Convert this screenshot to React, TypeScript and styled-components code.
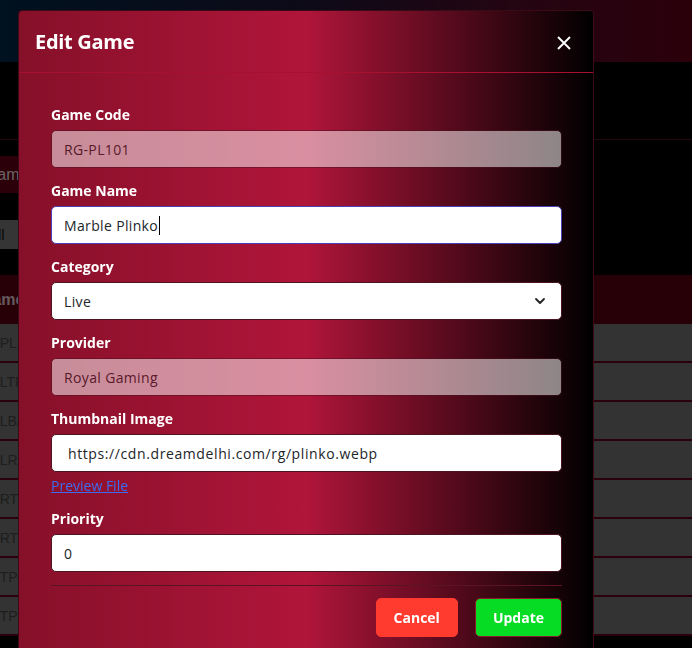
import styled, { createGlobalStyle } from "styled-components";

const GlobalStyle = createGlobalStyle`
  * { box-sizing: border-box; }
  body {
    margin: 0;
    background: #000;
    overflow: hidden;
    font-family: "Open Sans", "Noto Sans", sans-serif;
  }
`;

const gameRows = [
  "RG-PL101",
  "RG-LTP01",
  "RG-LBA01",
  "RG-LRC01",
  "RG-RTV01",
  "RG-RTV02",
  "RG-TP-01",
  "RG-TP-02",
];

const ChevronIcon = () => (
  <svg width="12" height="8" viewBox="0 0 12 8" fill="none">
    <path d="M2 2l4 4 4-4" stroke="#222" strokeWidth="1.8" strokeLinecap="round" strokeLinejoin="round" />
  </svg>
);

const CloseIcon = () => (
  <svg width="16" height="16" viewBox="0 0 16 16" fill="none">
    <path d="M2 2l12 12M14 2L2 14" stroke="#fff" strokeWidth="1.9" />
  </svg>
);

const App = () => {
  return (
    <>
      <GlobalStyle />
      <Page>
        <TopBar />
        <TitleArea />
        <ToolArea>
          <AddButton>Add Game</AddButton>
          <FilterSelect>All</FilterSelect>
        </ToolArea>
        <Table>
          <TableHead>Game Name</TableHead>
          {gameRows.map((code, index) => (
            <TableRow key={index}>{code}</TableRow>
          ))}
        </Table>
      </Page>

      <Backdrop />

      <Modal>
        <ModalHeader>
          <ModalTitle>Edit Game</ModalTitle>
          <CloseButton>
            <CloseIcon />
          </CloseButton>
        </ModalHeader>
        <ModalBody>
          <Field>
            <Label>Game Code</Label>
            <InputBox $disabled>RG-PL101</InputBox>
          </Field>
          <Field>
            <Label>Game Name</Label>
            <InputBox $focused>
              Marble Plinko
              <Caret />
            </InputBox>
          </Field>
          <Field>
            <Label>Category</Label>
            <InputBox>
              Live
              <SelectArrow>
                <ChevronIcon />
              </SelectArrow>
            </InputBox>
          </Field>
          <Field>
            <Label>Provider</Label>
            <InputBox $disabled>Royal Gaming</InputBox>
          </Field>
          <Field>
            <Label>Thumbnail Image</Label>
            <InputBox $wide>https://cdn.dreamdelhi.com/rg/plinko.webp</InputBox>
            <PreviewLink href="#">Preview File</PreviewLink>
          </Field>
          <Field>
            <Label>Priority</Label>
            <InputBox>0</InputBox>
          </Field>
          <Divider />
          <Footer>
            <ActionButton $color="#ff3b30">Cancel</ActionButton>
            <ActionButton $color="#06dc24" $border="#8b1a2c">
              Update
            </ActionButton>
          </Footer>
        </ModalBody>
      </Modal>
    </>
  );
};

export default App;

/* admin page behind the dialog */

const Page = styled.div`
  display: flex;
  flex-direction: column;
  width: 100%;
  height: 100vh;
  font-family: "Liberation Sans", sans-serif;
`;

const TopBar = styled.div`
  height: 62px;
  background: linear-gradient(90deg, #00223e 0%, #1c1430 45%, #4a0a24 75%, #560016 100%);
`;

const TitleArea = styled.div`
  height: 78px;
  border-bottom: 1px solid #4a0a1e;
`;

const ToolArea = styled.div`
  display: flex;
  flex-direction: column;
  align-items: flex-start;
  height: 135px;
  padding-top: 16px;
`;

const AddButton = styled.div`
  display: flex;
  align-items: center;
  height: 37px;
  margin-left: -62px;
  padding: 0 14px;
  background: #560012;
  color: #d8c8cc;
  font-size: 16px;
`;

const FilterSelect = styled.div`
  display: flex;
  align-items: center;
  width: 200px;
  height: 29px;
  margin-top: 27px;
  margin-left: -18px;
  padding-left: 6px;
  background: #6a6a6a;
  color: #111;
  font-size: 15px;
`;

const Table = styled.div`
  display: flex;
  flex-direction: column;
`;

const TableHead = styled.div`
  display: flex;
  align-items: center;
  height: 49px;
  margin-left: -68px;
  width: calc(100% + 68px);
  background: #4e000e;
  color: #c8b4ba;
  font-size: 16px;
  font-weight: 700;
`;

const TableRow = styled.div`
  display: flex;
  align-items: center;
  height: 39px;
  margin-left: -26px;
  width: calc(100% + 26px);
  background: #666;
  border-bottom: 2px solid #520016;
  color: #3c3c3c;
  font-size: 14px;
`;

const Backdrop = styled.div`
  position: fixed;
  inset: 0;
  background: rgba(0, 0, 0, 0.5);
`;

/* dialog */

const Modal = styled.div`
  position: fixed;
  top: 10px;
  left: 18px;
  width: 576px;
  height: 660px;
  border: 1px solid #3a0a16;
  border-radius: 4px;
  background: linear-gradient(90deg, #861029 0%, #b0153a 50%, #000 100%);
  font-family: "Open Sans", "Noto Sans", sans-serif;
  color: #fff;
  overflow: hidden;
`;

const ModalHeader = styled.div`
  display: flex;
  justify-content: space-between;
  align-items: center;
  height: 62px;
  padding: 0 17px 0 16px;
  border-bottom: 1px solid #a8102f;
`;

const ModalTitle = styled.h2`
  margin: 0;
  font-size: 20px;
  font-weight: 700;
  letter-spacing: -0.3px;
`;

const CloseButton = styled.div`
  display: flex;
  align-items: center;
  justify-content: center;
  width: 24px;
  height: 24px;
  margin-top: 2px;
`;

const ModalBody = styled.div`
  display: flex;
  flex-direction: column;
  padding: 31px 31px 0 32px;
`;

const Field = styled.div`
  display: flex;
  flex-direction: column;
  margin-bottom: 12px;
`;

const Label = styled.label`
  font-size: 14px;
  font-weight: 700;
  line-height: 21px;
  margin-bottom: 5px;
`;

const InputBox = styled.div<{ $disabled?: boolean; $focused?: boolean; $wide?: boolean }>`
  position: relative;
  display: flex;
  align-items: center;
  height: 38px;
  padding: 0 ${({ $wide }) => ($wide ? "16px" : "12px")};
  border: 1px solid ${({ $focused }) => ($focused ? "#4a40b8" : "#4a1420")};
  border-radius: 5px;
  background: #fff;
  color: #212529;
  font-size: 14px;
  opacity: ${({ $disabled }) => ($disabled ? 0.52 : 1)};
  letter-spacing: ${({ $wide }) => ($wide ? "0.6px" : "0.35px")};
`;

const Caret = styled.span`
  display: inline-block;
  width: 1px;
  height: 19px;
  margin-left: 1px;
  background: #000;
`;

const SelectArrow = styled.span`
  display: flex;
  margin-left: auto;
  margin-right: 3px;
`;

const PreviewLink = styled.a`
  margin-top: 3px;
  color: #3d6cf2;
  font-size: 14px;
  line-height: 21px;
  text-decoration: underline;
  align-self: flex-start;
`;

const Divider = styled.div`
  height: 1px;
  margin-top: 1px;
  background: #5a1424;
`;

const Footer = styled.div`
  display: flex;
  justify-content: flex-end;
  gap: 17px;
  padding-top: 12px;
`;

const ActionButton = styled.button<{ $color: string; $border?: string }>`
  height: 39px;
  padding: 0 17px;
  border: 1px solid ${({ $border, $color }) => $border ?? $color};
  border-radius: 5px;
  background: ${({ $color }) => $color};
  color: #fff;
  font-family: inherit;
  font-size: 14px;
  font-weight: 700;
`;
